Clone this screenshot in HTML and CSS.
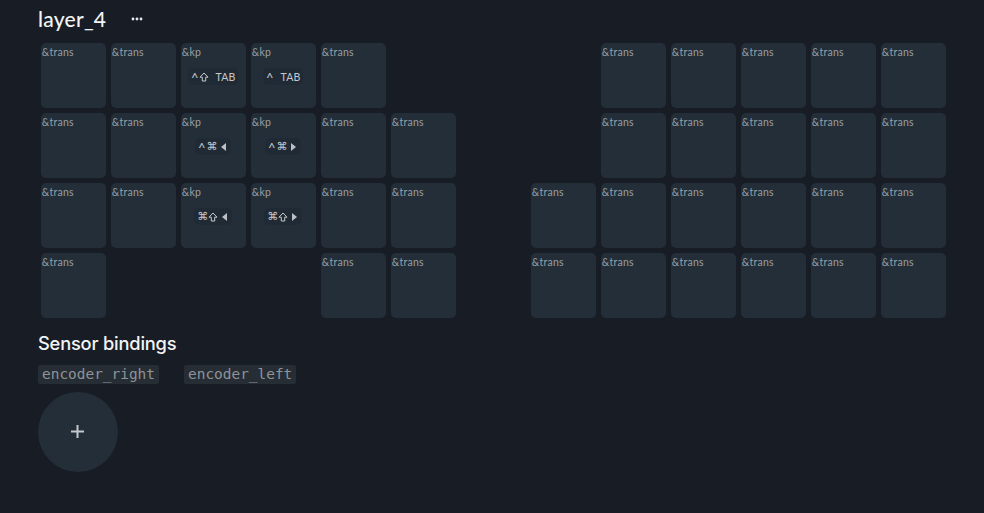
FILE: index.html
```html
<!DOCTYPE html>
<html lang="en">
<head>
<meta charset="utf-8">
<title>layer_4</title>
<link rel="stylesheet" href="styles.css">
</head>
<body>
<svg class="defs" width="0" height="0" aria-hidden="true"><defs>
  <symbol id="shift" viewBox="0 0 10 10"><path d="M5 1 1 5.2h2.3V9h3.4V5.2H9Z"/></symbol>
</defs></svg>
<main class="page">
  <header class="layer-head">
    <h1 class="layer-name">layer_4</h1>
    <button class="more" aria-label="More"><svg width="12" height="4" viewBox="0 0 12 4"><circle cx="2" cy="2" r="1.4"/><circle cx="6" cy="2" r="1.4"/><circle cx="10" cy="2" r="1.4"/></svg></button>
  </header>
  <section class="keys">
    <div class="key"><span class="bind">&amp;trans</span></div>
    <div class="key"><span class="bind">&amp;trans</span></div>
    <div class="key"><span class="bind">&amp;kp</span><span class="param"><span class="caret">^</span><svg class="shift"><use href="#shift"/></svg><span class="word">TAB</span></span></div>
    <div class="key"><span class="bind">&amp;kp</span><span class="param"><span class="caret">^</span><span class="word">TAB</span></span></div>
    <div class="key"><span class="bind">&amp;trans</span></div>
    <div class="gap"></div><div class="gap"></div><div class="gap"></div>
    <div class="key"><span class="bind">&amp;trans</span></div>
    <div class="key"><span class="bind">&amp;trans</span></div>
    <div class="key"><span class="bind">&amp;trans</span></div>
    <div class="key"><span class="bind">&amp;trans</span></div>
    <div class="key"><span class="bind">&amp;trans</span></div>

    <div class="key"><span class="bind">&amp;trans</span></div>
    <div class="key"><span class="bind">&amp;trans</span></div>
    <div class="key"><span class="bind">&amp;kp</span><span class="param"><span class="caret">^</span><span class="sym">⌘</span><span class="tri tri-l"></span></span></div>
    <div class="key"><span class="bind">&amp;kp</span><span class="param"><span class="caret">^</span><span class="sym">⌘</span><span class="tri tri-r"></span></span></div>
    <div class="key"><span class="bind">&amp;trans</span></div>
    <div class="key"><span class="bind">&amp;trans</span></div>
    <div class="gap"></div><div class="gap"></div>
    <div class="key"><span class="bind">&amp;trans</span></div>
    <div class="key"><span class="bind">&amp;trans</span></div>
    <div class="key"><span class="bind">&amp;trans</span></div>
    <div class="key"><span class="bind">&amp;trans</span></div>
    <div class="key"><span class="bind">&amp;trans</span></div>

    <div class="key"><span class="bind">&amp;trans</span></div>
    <div class="key"><span class="bind">&amp;trans</span></div>
    <div class="key"><span class="bind">&amp;kp</span><span class="param"><span class="sym">⌘</span><svg class="shift"><use href="#shift"/></svg><span class="tri tri-l"></span></span></div>
    <div class="key"><span class="bind">&amp;kp</span><span class="param"><span class="sym">⌘</span><svg class="shift"><use href="#shift"/></svg><span class="tri tri-r"></span></span></div>
    <div class="key"><span class="bind">&amp;trans</span></div>
    <div class="key"><span class="bind">&amp;trans</span></div>
    <div class="gap"></div>
    <div class="key"><span class="bind">&amp;trans</span></div>
    <div class="key"><span class="bind">&amp;trans</span></div>
    <div class="key"><span class="bind">&amp;trans</span></div>
    <div class="key"><span class="bind">&amp;trans</span></div>
    <div class="key"><span class="bind">&amp;trans</span></div>
    <div class="key"><span class="bind">&amp;trans</span></div>

    <div class="key"><span class="bind">&amp;trans</span></div>
    <div class="gap"></div><div class="gap"></div><div class="gap"></div>
    <div class="key"><span class="bind">&amp;trans</span></div>
    <div class="key"><span class="bind">&amp;trans</span></div>
    <div class="gap"></div>
    <div class="key"><span class="bind">&amp;trans</span></div>
    <div class="key"><span class="bind">&amp;trans</span></div>
    <div class="key"><span class="bind">&amp;trans</span></div>
    <div class="key"><span class="bind">&amp;trans</span></div>
    <div class="key"><span class="bind">&amp;trans</span></div>
    <div class="key"><span class="bind">&amp;trans</span></div>
  </section>
  <h2 class="section-title">Sensor bindings</h2>
  <div class="sensors">
    <code class="sensor">encoder_right</code>
    <code class="sensor">encoder_left</code>
  </div>
  <button class="add" aria-label="Add">
    <svg width="15" height="15" viewBox="0 0 15 15"><path d="M7.5 1v13M1 7.5h13"/></svg>
  </button>
</main>
</body>
</html>
```
FILE: styles.css
```css
* { box-sizing: border-box; }
html, body { margin: 0; height: 100%; }
body {
  background: #181d25;
  color: #fff;
  font-family: "Inter", "Liberation Sans", sans-serif;
  overflow: hidden;
}
.defs { display: block; height: 0; }
.page { padding: 6px 38px 0; }
.layer-head { display: flex; align-items: center; height: 26px; gap: 25px; }
.layer-name { margin: 0; font-family: "Lato", sans-serif; font-size: 21px; font-weight: 500; line-height: 26px; letter-spacing: .25px; color: #f2f4f5; }
.more { border: 0; padding: 0; background: none; display: flex; }
.more svg { fill: #e8eaec; }
.keys {
  display: grid;
  grid-template-columns: repeat(13, 65px);
  grid-auto-rows: 65px;
  gap: 5px;
  margin: 11px 0 0 2.7px;
}
.key {
  display: flex;
  flex-direction: column;
  align-items: center;
  background: #232e38;
  border-radius: 5px;
  padding: 3px 1px;
}
.bind {
  align-self: flex-start;
  font-family: "Lato", sans-serif;
  font-size: 10.5px;
  line-height: 13px;
  color: #989fa5;
  letter-spacing: 0.25px;
}
.param {
  display: flex;
  align-items: center;
  height: 17px;
  margin-top: 9px;
  padding: 0 3px;
  background: #202a34;
  border-radius: 5px;
  color: #c4c8cc;
}
.caret { font-family: "Lato", sans-serif; font-size: 13px; line-height: 12px; margin-top: 3px; margin-right: 1px; }
.sym { font-family: "DejaVu Sans", sans-serif; font-size: 11px; line-height: 12px; margin-top: 1px; }
.shift { width: 10px; height: 10px; fill: none; stroke: #c4c8cc; stroke-width: 1; }
.word { margin-left: 6px; font-family: "Lato", sans-serif; font-size: 10.5px; letter-spacing: .2px; }
.tri { width: 0; height: 0; margin-left: 4px; margin-right: 2px; border-top: 4px solid transparent; border-bottom: 4px solid transparent; }
.tri-l { border-right: 5px solid #bcc0c4; }
.tri-r { border-left: 5px solid #bcc0c4; }
.section-title { margin: 13px 0 0; font-size: 18.3px; font-weight: 500; line-height: 24px; color: #f2f4f5; letter-spacing: -.2px; }
.sensors { display: flex; gap: 25px; margin-top: 10px; }
.sensor {
  font-family: "DejaVu Sans Mono", monospace;
  font-size: 14.45px;
  line-height: 19px;
  padding: 0 4px;
  border-radius: 2px;
  background: #262d34;
  color: #8f9398;
}
.add {
  display: flex;
  align-items: center;
  justify-content: center;
  width: 80px;
  height: 80px;
  margin-top: 8px;
  padding: 0 1px 1px 0;
  border: 0;
  border-radius: 50%;
  background: #232e38;
}
.add svg { stroke: #c4c8cc; stroke-width: 2; fill: none; }
```
